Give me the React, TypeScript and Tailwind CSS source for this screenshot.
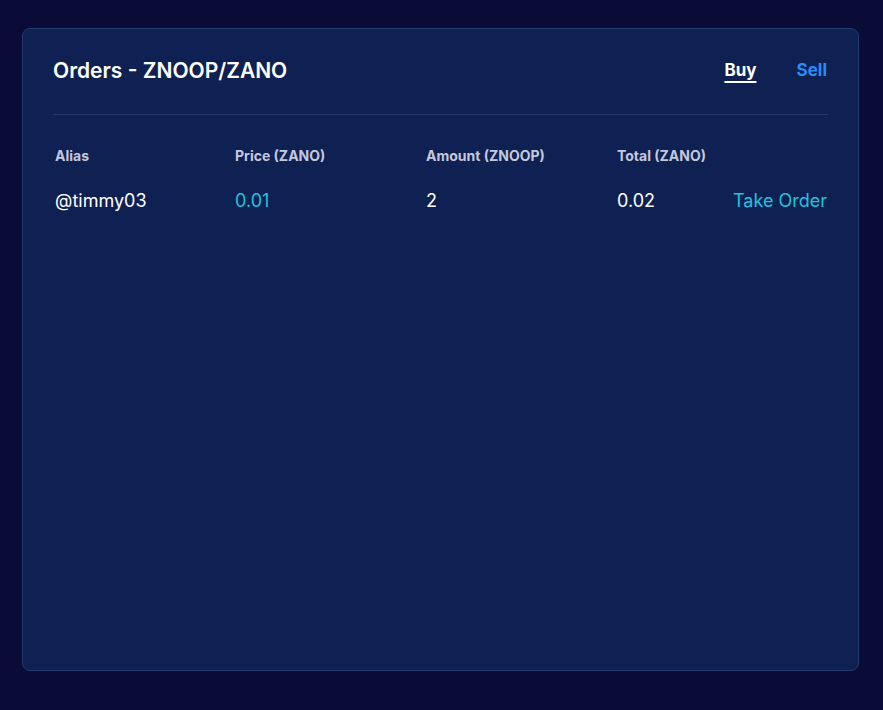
import React from "react";

const orders = [
  { alias: "@timmy03", price: "0.01", amount: "2", total: "0.02" },
];

export default function App() {
  return (
    <div
      className="min-h-[710px] bg-[#0b0b38] pl-[22px] pr-[24px] pt-[28px]"
      style={{ fontFamily: "Inter, 'Noto Sans', sans-serif" }}
    >
      <div className="h-[643px] rounded-lg border border-[#223a70] bg-[#0f2052] px-[30px] pt-[28px]">
        {/* Header */}
        <div className="flex items-center justify-between border-b border-[#25396b] pb-[29px]">
          <h1 className="text-[21px] font-semibold leading-7 text-white">
            Orders - ZNOOP/ZANO
          </h1>
          <div className="-mt-[2px] flex items-center gap-[40px] pr-[1px]">
            <button className="text-[17px] font-bold leading-6 text-white underline decoration-2 underline-offset-[5px]">
              Buy
            </button>
            <button className="text-[17px] font-bold leading-6 text-[#2b8cf7]">
              Sell
            </button>
          </div>
        </div>

        {/* Table */}
        <div className="pt-[31px]">
          <div className="grid grid-cols-[180px_191px_191px_1fr] px-[2px] text-[14px] font-bold leading-5 text-[#c5c8dc]">
            <div>Alias</div>
            <div>Price (ZANO)</div>
            <div>Amount (ZNOOP)</div>
            <div>Total (ZANO)</div>
          </div>
          {orders.map((o) => (
            <div
              key={o.alias}
              className="mt-[21px] grid grid-cols-[180px_191px_191px_1fr] items-center px-[2px] text-[18px] text-white"
            >
              <div>{o.alias}</div>
              <div className="text-[#22c3de]">{o.price}</div>
              <div>{o.amount}</div>
              <div className="flex items-center justify-between">
                <span>{o.total}</span>
                <button className="-mr-[1px] text-[#22c3de]">Take Order</button>
              </div>
            </div>
          ))}
        </div>
      </div>
    </div>
  );
}
